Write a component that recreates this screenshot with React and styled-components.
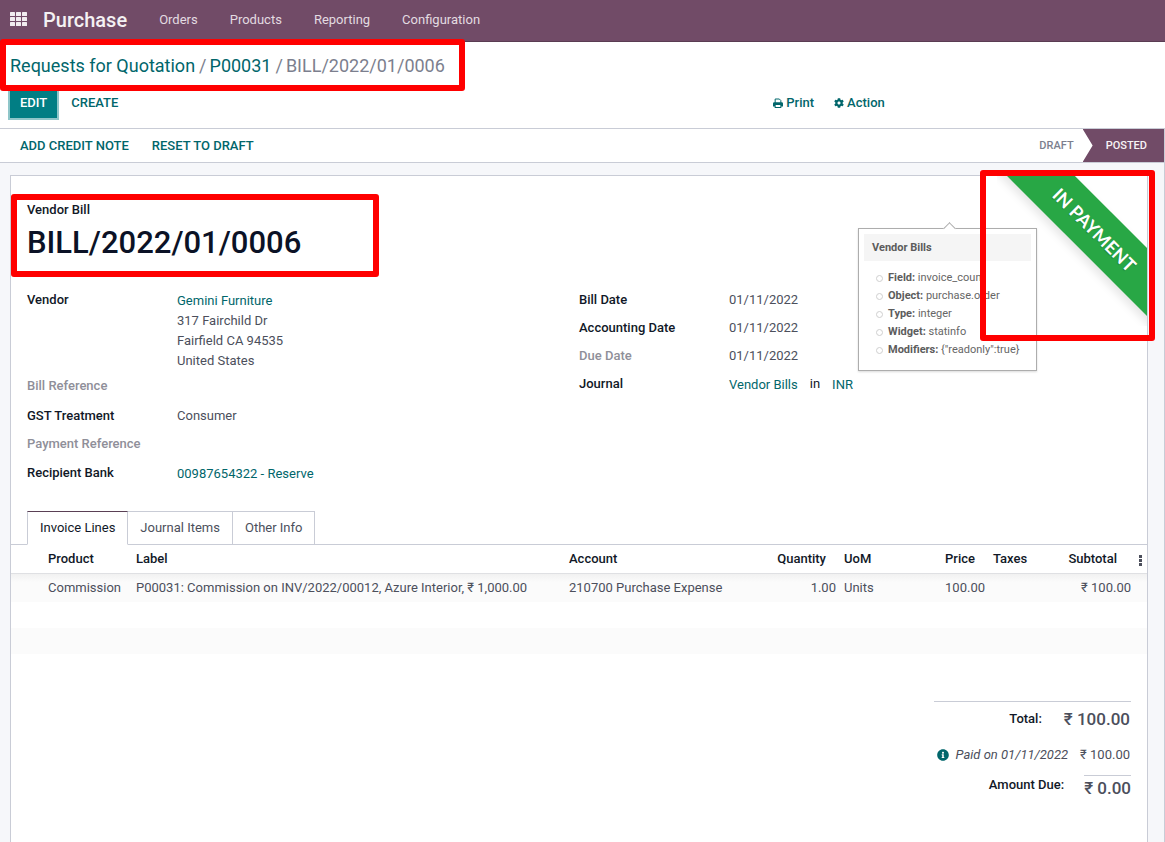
import React from "react";
import styled, { createGlobalStyle, css } from "styled-components";
import { FaCog, FaInfoCircle } from "react-icons/fa";

const color = {
  brand: "#714b67",
  teal: "#017e84",
  link: "#01666b",
  heading: "#111827",
  text: "#4c4f5c",
  muted: "#8f8f99",
  line: "#c9ccd6",
  red: "#ff0000",
};

const GlobalStyle = createGlobalStyle`
  * { box-sizing: border-box; }
  html, body { margin: 0; background: #fff; }
  body {
    font-family: Roboto, "Liberation Sans", sans-serif;
    font-size: 13px;
    line-height: 20px;
    color: ${color.text};
  }
  html, body, #root { height: 100%; }
  body { overflow: hidden; }
  button { font: inherit; color: inherit; background: none; border: 0; padding: 0; cursor: pointer; }
  a { color: ${color.link}; text-decoration: none; }
  h1, p, ul, dl, dd, ol { margin: 0; padding: 0; }
  ul, ol { list-style: none; }
`;

const Page = styled.div`
  display: flex;
  flex-direction: column;
  height: 100%;
`;

const Navbar = styled.header`
  display: flex;
  align-items: center;
  height: 42px;
  flex: none;
  padding: 0 10px 2px;
  background: ${color.brand};
  border-bottom: 1px solid #5a3c52;
  color: #f1edf0;
`;

const AppsButton = styled.button`
  display: flex;
  margin-right: 15px;
`;

const Brand = styled.a`
  color: #f4f1f3;
  font-size: 20px;
  font-weight: 500;
  margin-right: 32px;
`;

const NavLinks = styled.nav`
  display: flex;
  gap: 32px;
  a { color: #e3dbe1; }
`;

const ControlPanel = styled.div`
  display: flex;
  flex-direction: column;
  flex: none;
  height: 87px;
  border-bottom: 1px solid ${color.line};
`;

const Highlight = styled.div`
  position: absolute;
  inset: ${(p) => p.$inset};
  border: 6px solid ${color.red};
  border-radius: 3px;
  pointer-events: none;
  z-index: 5;
`;

const Breadcrumb = styled.nav`
  position: relative;
  align-self: flex-start;
  padding: 12px 20px 0 10px;
  height: 48px;
  ol { display: flex; font-size: 18px; line-height: 24px; color: #7c7f8e; }
  li + li::before { content: "/"; padding: 0 3px 0 4px; }
`;

const ActionRow = styled.div`
  display: grid;
  grid-template-columns: 2fr 1fr;
  align-items: center;
  height: 26px;
  margin-top: -3px;
  padding: 0 10px;
`;

const ButtonGroup = styled.div`
  display: flex;
  align-items: center;
  gap: ${(p) => p.$gap || 0};
`;

const PrimaryButton = styled.button`
  height: 31px;
  padding: 0 10px;
  background: ${color.teal};
  color: #fff;
  font-weight: 500;
  text-transform: uppercase;
  box-shadow: 0 0 0 2px #8fc6c9;
`;

const LinkButton = styled.button`
  display: flex;
  align-items: center;
  gap: 3px;
  padding: 0;
  color: ${color.link};
  font-weight: 500;
  text-transform: ${(p) => (p.$upper ? "uppercase" : "none")};
`;

const FormView = styled.main`
  flex: 1;
  display: flex;
  flex-direction: column;
  min-height: 0;
  background: #f6f7fa;
  border-right: 1px solid ${color.line};
`;

const StatusBar = styled.div`
  display: flex;
  justify-content: space-between;
  flex: none;
  height: 34px;
  padding-left: 20px;
  background: #fff;
  border-bottom: 1px solid ${color.line};
`;

const Stages = styled.ol`
  display: flex;
  align-items: stretch;
  font-size: 11px;
  font-weight: 500;
`;

const Stage = styled.li`
  display: flex;
  align-items: center;
  padding: 0 9px;
  color: #7c7f8e;
  ${(p) =>
    p.$active &&
    css`
      padding: 0 17px 0 23px;
      color: #f7f3f6;
      background: ${color.brand};
      clip-path: polygon(0 0, 100% 0, 100% 100%, 0 100%, 10px 50%);
    `}
`;

const Sheet = styled.section`
  position: relative;
  flex: 1;
  margin: 12px 16px 0 10px;
  padding-top: 24px;
  background: #fff;
  border: 1px solid ${color.line};
  border-bottom: 0;
`;

const RibbonArea = styled.div`
  position: absolute;
  top: 0;
  right: 0;
  width: 150px;
  height: 150px;
`;

const RibbonClip = styled.div`
  width: 100%;
  height: 100%;
  overflow: hidden;
`;

const Ribbon = styled.span`
  display: flex;
  align-items: center;
  justify-content: center;
  width: 226px;
  height: 48px;
  margin: 29px 0 0 -16px;
  padding-left: 2px;
  transform: rotate(45deg);
  background: #28a745;
  color: #fff;
  font: 700 18px/18px Lato, sans-serif;
  text-shadow: 0 1px 1px rgba(0, 0, 0, 0.2);
  box-shadow: 0 5px 10px rgba(0, 0, 0, 0.1);
`;

const Title = styled.div`
  position: relative;
  width: 352px;
  max-width: 100%;
  margin-left: 16px;
  color: ${color.heading};
  font-weight: 500;
  h1 { font-size: 31px; line-height: 40px; font-weight: 500; color: #0b1226; margin-top: 3px; }
`;

const Groups = styled.div`
  display: grid;
  grid-template-columns: 1fr 1fr;
  padding: 25px 16px 0;
`;

const Fields = styled.dl`
  display: flex;
  flex-direction: column;
`;

const Field = styled.div`
  display: grid;
  grid-template-columns: 150px 1fr;
  min-height: ${(p) => p.$height || "28px"};
  dt {
    font-weight: 500;
    padding-top: 2px;
    color: ${(p) => (p.$empty ? color.muted : color.heading)};
  }
  dd { padding-top: ${(p) => (p.$link ? "3px" : "2px")}; }
`;

const Joined = styled.span`
  display: flex;
  gap: 12px;
  span { color: ${color.heading}; margin-top: -1px; }
`;

const Tabs = styled.div`
  display: flex;
  margin: 22px 0 -1px;
  padding-left: 16px;
  position: relative;
`;

const Tab = styled.button`
  height: 34px;
  padding: 0 12px;
  border: 1px solid ${color.line};
  border-left-width: ${(p) => (p.$active ? "1px" : "0")};
  background: #fff;
  ${(p) =>
    p.$active &&
    css`
      color: ${color.heading};
      border-top-color: #5a4055;
      border-bottom-color: #fff;
    `}
`;

const Lines = styled.table`
  width: 100%;
  border-collapse: collapse;
  table-layout: fixed;
  border-top: 1px solid ${color.line};
  th, td { padding: 0 4px; text-align: left; white-space: nowrap; }
  th { height: 29px; font-weight: 500; color: ${color.heading}; border-bottom: 1px solid #dfe0e3; }
  td { height: 26px; }
  tbody tr:first-child td { height: 28px; }
  tbody tr:nth-child(odd) { background: #fbfbfb; }
  tbody tr:first-child { background: linear-gradient(#f1f1f1, #fbfbfb 8px); }
  th.num { text-align: right; padding-right: 14px; }
  td.num { text-align: right; }
  td.last { padding-right: 16px; }
  th.menu { padding: 2px 0 0 8px; }
`;

const Kebab = styled.button`
  display: flex;
  svg { display: block; }
`;

const Totals = styled.div`
  width: 197px;
  margin: 47px 16px 0 auto;
  border-top: 1px solid ${color.line};
`;

const TotalRow = styled.div`
  display: flex;
  justify-content: flex-end;
  align-items: center;
  height: ${(p) => p.$height};
  padding-right: 1px;
  gap: 12px;
  em { margin-left: -5px; }
  svg { color: ${color.link}; }
  ${(p) =>
    p.$sum &&
    css`
      gap: 22px;
      span { color: ${color.heading}; font-weight: 500; }
      strong { font-size: 17px; font-weight: 500; }
    `}
  ${(p) =>
    p.$due &&
    css`
      align-items: flex-start;
      gap: 20px;
      padding-right: 0;
    `}
`;

const Due = styled.strong`
  border-top: 1px solid ${color.line};
  line-height: 24px;
`;

const Popover = styled.aside`
  position: absolute;
  top: 52px;
  right: 110px;
  width: 179px;
  height: 143px;
  padding: 5px;
  background: #fff;
  border: 1px solid #adadad;
  box-shadow: 0 1px 2px rgba(0, 0, 0, 0.15);
  font-size: 11px;
  line-height: 18px;
  color: #666;
  z-index: 2;
  strong { font-weight: 700; color: #5c5c5c; }
  &::before {
    content: "";
    position: absolute;
    top: -5px;
    left: 86px;
    width: 8px;
    height: 8px;
    background: #fff;
    border: 1px solid #adadad;
    border-width: 1px 0 0 1px;
    transform: rotate(45deg);
  }
  header { position: relative; height: 27px; padding: 5px 8px; background: #f5f5f5; }
  ul { padding: 8px 0 0 13px; }
  li { display: flex; align-items: center; gap: 5px; white-space: pre; }
  li::before { content: ""; width: 5px; height: 5px; margin-left: -1px; border: 1px solid #cfcfcf; border-radius: 50%; }
`;

const AppsIcon = () => (
  <svg width="18" height="15" viewBox="0 0 18 15" fill="#f1edf0" aria-hidden="true">
    {[0, 5, 10].map((y) =>
      [0, 6, 12].map((x) => <rect key={`${x}-${y}`} x={x} y={y} width="5" height="4" rx="0.5" />)
    )}
  </svg>
);

const PrintIcon = () => (
  <svg width="10" height="10" viewBox="0 0 12 12" fill="none" stroke="currentColor" aria-hidden="true">
    <path d="M2.600 6V1.200h5L9.400 3v3" strokeWidth="1.200" />
    <path fill="currentColor" stroke="none" fillRule="evenodd" d="M1.500 5.200h9A1.500 1.500 0 0 1 12 6.700v3.500h-2V12H2v-1.800H0V6.700a1.500 1.500 0 0 1 1.500-1.500zM3.200 8.500v2.300h5.600V8.500z" />
  </svg>
);

const details = [
  ["Field:", "invoice_count"],
  ["Object:", "purchase.order"],
  ["Type:", "integer"],
  ["Widget:", "statinfo"],
  ["Modifiers:", '{"readonly":true}'],
];

export default function App() {
  return (
    <Page>
      <GlobalStyle />
      <Navbar>
        <AppsButton aria-label="Apps"><AppsIcon /></AppsButton>
        <Brand href="#purchase">Purchase</Brand>
        <NavLinks>
          <a href="#orders">Orders</a>
          <a href="#products">Products</a>
          <a href="#reporting">Reporting</a>
          <a href="#configuration">Configuration</a>
        </NavLinks>
      </Navbar>

      <ControlPanel>
        <Breadcrumb aria-label="Breadcrumb">
          <ol>
            <li><a href="#rfq">Requests for Quotation</a></li>
            <li><a href="#p00031">P00031</a></li>
            <li>BILL/2022/01/0006</li>
          </ol>
          <Highlight $inset="-3px 0 -1px 0" />
        </Breadcrumb>
        <ActionRow>
          <ButtonGroup $gap="14px">
            <PrimaryButton>Edit</PrimaryButton>
            <LinkButton $upper>Create</LinkButton>
          </ButtonGroup>
          <ButtonGroup $gap="20px">
            <LinkButton><PrintIcon />Print</LinkButton>
            <LinkButton><FaCog size={10} />Action</LinkButton>
          </ButtonGroup>
        </ActionRow>
      </ControlPanel>

      <FormView>
        <StatusBar>
          <ButtonGroup $gap="23px">
            <LinkButton $upper>Add Credit Note</LinkButton>
            <LinkButton $upper>Reset to Draft</LinkButton>
          </ButtonGroup>
          <Stages>
            <Stage>DRAFT</Stage>
            <Stage $active>POSTED</Stage>
          </Stages>
        </StatusBar>

        <Sheet>
          <RibbonArea>
            <RibbonClip><Ribbon>IN PAYMENT</Ribbon></RibbonClip>
            <Highlight $inset="-6px -8px -15px -17px" />
          </RibbonArea>

          <Popover>
            <header><strong>Vendor Bills</strong></header>
            <ul>
              {details.map(([k, v]) => (
                <li key={k}><span><strong>{k}</strong> {v}</span></li>
              ))}
            </ul>
          </Popover>

          <Title>
            <p>Vendor Bill</p>
            <h1>BILL/2022/01/0006</h1>
            <Highlight $inset="-6px 0 -14px -16px" />
          </Title>

          <Groups>
            <Fields>
              <Field $link $height="86px">
                <dt>Vendor</dt>
                <dd>
                  <a href="#gemini">Gemini Furniture</a>
                  <br />317 Fairchild Dr
                  <br />Fairfield CA 94535
                  <br />United States
                </dd>
              </Field>
              <Field $empty $height="30px"><dt>Bill Reference</dt><dd /></Field>
              <Field><dt>GST Treatment</dt><dd>Consumer</dd></Field>
              <Field $empty $height="29px"><dt>Payment Reference</dt><dd /></Field>
              <Field $link><dt>Recipient Bank</dt><dd><a href="#bank">00987654322 - Reserve</a></dd></Field>
            </Fields>
            <Fields>
              <Field><dt>Bill Date</dt><dd>01/11/2022</dd></Field>
              <Field><dt>Accounting Date</dt><dd>01/11/2022</dd></Field>
              <Field $empty><dt>Due Date</dt><dd>01/11/2022</dd></Field>
              <Field $link>
                <dt>Journal</dt>
                <dd>
                  <Joined>
                    <a href="#journal">Vendor Bills</a>
                    <span>in</span>
                    <a href="#inr">INR</a>
                  </Joined>
                </dd>
              </Field>
            </Fields>
          </Groups>

          <Tabs role="tablist">
            <Tab role="tab" aria-selected="true" $active>Invoice Lines</Tab>
            <Tab role="tab" aria-selected="false">Journal Items</Tab>
            <Tab role="tab" aria-selected="false">Other Info</Tab>
          </Tabs>

          <Lines>
            <colgroup>
              <col width="33" />
              <col width="88" />
              <col />
              <col width="175" />
              <col width="100" />
              <col width="50" />
              <col width="99" />
              <col width="44" />
              <col width="98" />
              <col width="16" />
            </colgroup>
            <thead>
              <tr>
                <th />
                <th>Product</th>
                <th>Label</th>
                <th>Account</th>
                <th className="num">Quantity</th>
                <th>UoM</th>
                <th className="num">Price</th>
                <th>Taxes</th>
                <th className="num">Subtotal</th>
                <th className="menu">
                  <Kebab aria-label="Optional columns">
                    <svg width="3" height="11" viewBox="0 0 3 11" fill={color.text}>
                      <rect width="3" height="3" />
                      <rect y="4" width="3" height="3" />
                      <rect y="8" width="3" height="3" />
                    </svg>
                  </Kebab>
                </th>
              </tr>
            </thead>
            <tbody>
              <tr>
                <td />
                <td>Commission</td>
                <td>P00031: Commission on INV/2022/00012, Azure Interior, ₹ 1,000.00</td>
                <td>210700 Purchase Expense</td>
                <td className="num">1.00</td>
                <td>Units</td>
                <td className="num">100.00</td>
                <td />
                <td className="num last" colSpan={2}>₹ 100.00</td>
              </tr>
              <tr><td colSpan={10} /></tr>
              <tr><td colSpan={10} /></tr>
            </tbody>
          </Lines>

          <Totals>
            <TotalRow $sum $height="34px"><span>Total:</span><strong>₹ 100.00</strong></TotalRow>
            <TotalRow $height="39px">
              <FaInfoCircle size={12} />
              <em>Paid on 01/11/2022</em>
              <div>₹ 100.00</div>
            </TotalRow>
            <TotalRow $sum $due $height="36px">
              <span>Amount Due:</span><Due>₹ 0.00</Due>
            </TotalRow>
          </Totals>
        </Sheet>
      </FormView>
    </Page>
  );
}
